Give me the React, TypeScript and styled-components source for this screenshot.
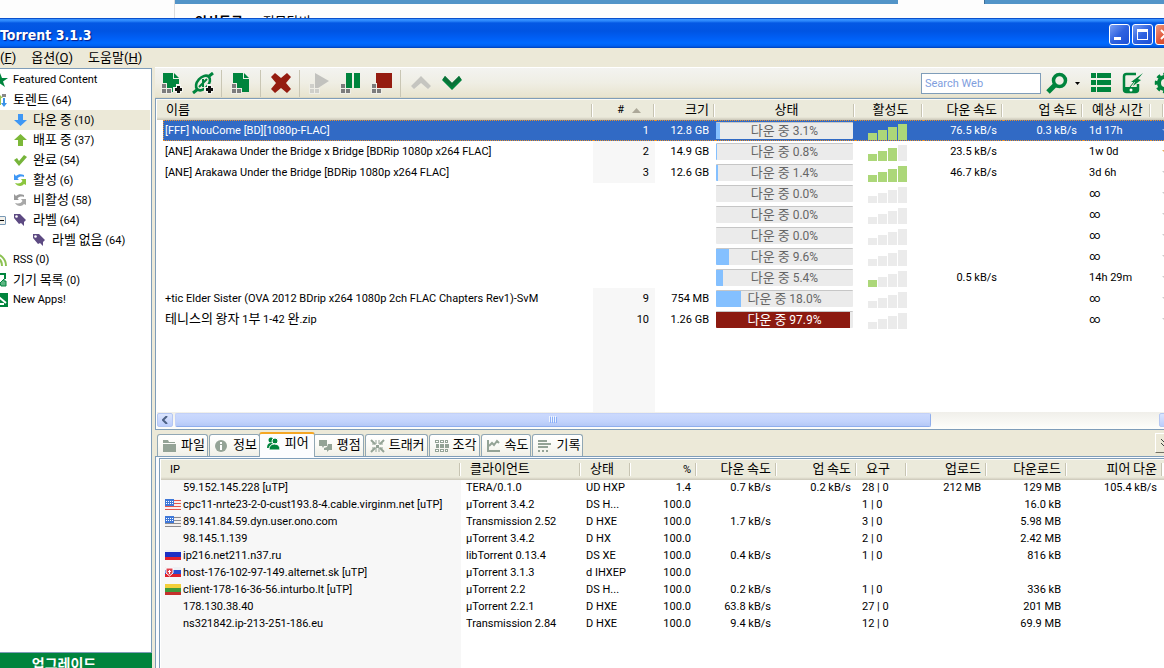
import React from 'react';
import styled, { createGlobalStyle, css } from 'styled-components';

const GlobalStyle = createGlobalStyle`
  html, body { margin: 0; padding: 0; overflow: hidden; background: #fdfdfd; }
  *, *::before, *::after { box-sizing: border-box; }
  body, button, input, table {
    font-family: Roboto, "Noto Sans CJK KR", sans-serif;
    font-size: 11px;
    line-height: 16px;
    color: #000;
  }
  button { border: 0; padding: 0; background: none; }
  svg { display: block; flex: none; }
`;

const GREEN = '#00843d';
const GRAY = '#94a396';
const LINE = '#7f9db9';
const FACE = '#ece9d8';

/* ---------- text ---------- */

const Hangul = styled.span`
  font-size: 13px;
  line-height: 16px;
`;

const Label = ({ children }: { children: string }) => (
  <>
    {children.split(/([\uac00-\ud7a3]+)/).map((part, i) =>
      i % 2 ? <Hangul key={i}>{part}</Hangul> : part,
    )}
  </>
);

/* ---------- frame ---------- */

const Screen = styled.div`
  height: 100vh;
  display: flex;
  flex-direction: column;
  overflow: hidden;
`;

const Backdrop = styled.div`
  height: 18px;
  flex: none;
  display: flex;
  overflow: hidden;
`;

const BackdropPage = styled.div`
  flex: 1;
  margin-left: 174px;
  border-left: 1px solid #dcdcdc;
`;

const BackdropBars = styled.div`
  display: grid;
  grid-template-columns: 723px 87px 1fr;
  height: 4px;
  background: #5294c8;
  & > i { background: #fdfdfd; grid-column: 2; border-right: 1px solid #3f6f98; }
`;

const BackdropLinks = styled.div`
  display: flex;
  gap: 20px;
  padding: 10px 0 0 20px;
  font-size: 13px;
  white-space: nowrap;
  line-height: 16px;
`;

const TitleBar = styled.header`
  height: 30px;
  flex: none;
  display: flex;
  align-items: center;
  overflow: hidden;
  background: linear-gradient(#0a50cc 0, #0a50cc 1px, #3c94ff 1px, #2a86fb 3px, #0458e4 5px, #0054e3 13px, #005ff5 20px, #006aff 25px, #0060f0 28px, #0040b8 30px);
`;

const TitleText = styled.h1`
  flex: 1;
  margin: 0;
  padding-top: 3px;
  font-family: "DejaVu Sans Condensed", "DejaVu Sans", sans-serif;
  font-size: 14px;
  font-weight: bold;
  color: #fff;
  text-shadow: 1px 1px 1px #0a1883;
`;

const WindowButtons = styled.div`
  display: flex;
  gap: 2px;
  margin: 3px -12px 0 0;
`;

const WindowButton = styled.button<{ $close?: boolean }>`
  width: 21px;
  height: 21px;
  border: 1px solid #fff;
  border-radius: 3px;
  background: ${(p) =>
    p.$close
      ? 'linear-gradient(135deg, #f09a80, #e0553a 50%, #c8401c)'
      : 'linear-gradient(135deg, #7ba0f4, #2e62e0 50%, #1c4fd6)'};
`;

const MenuBar = styled.nav`
  height: 19px;
  flex: none;
  display: flex;
  gap: 15px;
  align-items: center;
  background: ${FACE};
`;

const MenuButton = styled.button`
  font-size: 13px;
  line-height: 18px;
`;

const Body = styled.div`
  flex: 1;
  min-height: 0;
  display: flex;
  background: ${FACE};
`;

/* ---------- side bar ---------- */

const Sidebar = styled.aside`
  width: 152px;
  flex: none;
  margin-top: 1px;
  display: flex;
  flex-direction: column;
  overflow: hidden;
  border-top: 1px solid ${LINE};
  background: #fff;
`;

const Tree = styled.ul`
  flex: 1;
  margin: 0;
  padding: 1px 1px 0 0;
  list-style: none;
  border-right: 1px solid ${LINE};
  border-bottom: 1px solid ${LINE};
`;

const TreeRow = styled.li<{ $level: number; $selected?: boolean }>`
  position: relative;
  display: flex;
  align-items: center;
  gap: 5px;
  height: 20px;
  white-space: nowrap;
  background: ${(p) => (p.$selected ? FACE : 'none')};
  & > svg { margin-left: ${(p) => [-8, 12, 31][p.$level]}px; }
`;

const Expander = styled.button`
  position: absolute;
  left: -4px;
  top: 6px;
  width: 10px;
  height: 9px;
  border: 1px solid #7898b5;
  border-radius: 1px;
  background: linear-gradient(#000, #000) center / 5px 1px no-repeat, #f2f0ea;
`;

const Upgrade = styled.button`
  height: 22px;
  flex: none;
  margin-bottom: -7px;
  padding: 0 24px 0 0;
  background: ${GREEN};
  color: #fff;
  font-size: 14px;
  font-weight: bold;
`;

/* ---------- main column ---------- */

const Main = styled.main`
  flex: 1;
  min-width: 0;
  margin-left: 3px;
  display: flex;
  flex-direction: column;
`;

const Toolbar = styled.div`
  height: 31px;
  flex: none;
  display: flex;
  align-items: center;
  padding: 0 0 0 1px;
  overflow: hidden;
  border-top: 1px solid #fff;
  background: linear-gradient(#f3f3f0, #efeee4 50%, #e8e4cf 95%, #d8d3bd);
`;

const ToolButton = styled.button`
  width: 31px;
  height: 28px;
  flex: none;
  display: flex;
  align-items: center;
  justify-content: center;
`;

const ToolSeparator = styled.span`
  width: 1px;
  height: 27px;
  margin: 0 4px 0 3px;
  background: #c9c6b4;
`;

const SearchInput = styled.input`
  width: 120px;
  height: 21px;
  margin-left: auto;
  padding: 0 3px;
  border: 1px solid ${LINE};
  background: #fff;
  &::placeholder { color: #809ede; opacity: 1; }
`;

const ToolbarEnd = styled.div`
  display: flex;
  align-items: center;
  gap: 10px;
  margin: 0 -12px 0 5px;
`;

const SearchButton = styled.button`
  display: flex;
  align-items: center;
  gap: 7px;
`;

const ListPane = styled.section`
  flex: 331 1 0;
  min-height: 0;
  display: flex;
  flex-direction: column;
  border: solid ${LINE};
  border-width: 1px 0 1px 1px;
  padding-left: 1px;
  background: #fff;
`;

const TableArea = styled.div`
  flex: 1;
  min-height: 0;
  overflow: hidden;
`;

const Grid = styled.table`
  width: 100%;
  height: 100%;
  table-layout: fixed;
  border-collapse: separate;
  border-spacing: 0;
`;

const HeadCell = styled.th<{ $align?: string }>`
  height: 21px;
  padding: 0 6px 0 9px;
  font-weight: normal;
  white-space: nowrap;
  overflow: hidden;
  text-align: ${(p) => p.$align || 'left'};
  border-top: 1px solid #fbfaf5;
  background:
    linear-gradient(to right, #c7c4b2 50%, #fff 50%) right center / 2px 13px no-repeat,
    linear-gradient(#ebeadb 0, #ebeadb calc(100% - 3px), #cbc7b8 100%);
`;

const SortHead = styled.span`
  display: flex;
  align-items: center;
  justify-content: flex-end;
  gap: 8px;
  padding-right: 8px;
`;

const cellBase = css`
  padding: 0 6px;
  white-space: nowrap;
  overflow: hidden;
`;

const Cell = styled.td<{ $align?: string; $shade?: boolean }>`
  ${cellBase}
  height: 21px;
  text-align: ${(p) => p.$align || 'left'};
  background: ${(p) => (p.$shade ? '#f7f7f7' : 'none')};
`;

const Gutter = styled.td`
  padding: 0;
`;

const NameCell = styled(Cell)`
  padding-left: 2px;
`;

const StatusCell = styled(Cell)`
  padding: 0 2px 0 1px;
`;

const TorrentRow = styled.tr<{ $selected?: boolean }>`
  ${(p) =>
    p.$selected &&
    css`
      color: #fff;
      & > ${Cell} {
        background: #316ac5;
        border: dotted #e8912e;
        border-width: 1px 0;
      }
      & > ${Cell}:nth-child(2) { border-left-width: 1px; padding-left: 1px; }
    `}
`;

/* takes the height that the data rows leave, and carries the column shading down */
const FillerRow = styled.tr`
  height: 100%;
`;

const FillerCell = styled.td<{ $shade?: boolean }>`
  padding: 0;
  background: ${(p) => (p.$shade ? '#f7f7f7' : 'none')};
`;

const Progress = styled.div<{ $late?: boolean }>`
  position: relative;
  height: 17px;
  border-top: 1px solid #c6c6c6;
  border-radius: 1px;
  overflow: hidden;
  background: #ebebeb;
  color: ${(p) => (p.$late ? '#fff' : '#666')};
  font-size: 12px;
  text-align: center;
  line-height: 15px;
`;

const ProgressFill = styled.div<{ $late?: boolean }>`
  position: absolute;
  inset: -1px auto 0 0;
  background: ${(p) => (p.$late ? '#8c1a10' : '#84c0ff')};
`;

const ProgressText = styled.span`
  position: relative;
  & > ${Hangul} { line-height: 15px; }
`;

const Meter = styled.div`
  display: flex;
  align-items: flex-end;
  gap: 1px;
  height: 18px;
  padding-left: 7px;
`;

const MeterBar = styled.i<{ $step: number; $on: boolean }>`
  width: 9px;
  height: ${(p) => 4 + p.$step * 3}px;
  background: ${(p) => (p.$on ? '#acd779' : '#ebebeb')};
`;

const RatingCell = styled(Cell)`
  padding: 0 0 0 11px;
`;

/* ---------- scroll bar ---------- */

const ScrollBar = styled.div`
  height: 17px;
  flex: none;
  display: flex;
  gap: 2px;
  padding: 1px 0 2px;
  margin-right: -11px;
  background: linear-gradient(#f0efea, #fefefb);
`;

const ScrollArrow = styled.button`
  width: 16px;
  flex: none;
  display: flex;
  align-items: center;
  justify-content: center;
  border: 1px solid #b5c7f2;
  border-radius: 2px;
  background: linear-gradient(#dbe5fe, #bccdfb);
`;

const ScrollTrack = styled.div`
  flex: 1;
`;

const ScrollThumb = styled.div`
  width: 77%;
  height: 100%;
  display: flex;
  align-items: center;
  justify-content: center;
  gap: 1px;
  border: 1px solid #8fadec;
  border-left-color: #c3d1f8;
  border-top-color: #c3d1f8;
  border-radius: 2px;
  background: linear-gradient(#cbd9fd, #c2d3fc 60%, #b4c8f6);
  & > i { width: 1px; height: 6px; background: #8cb0f8; box-shadow: -1px -1px 0 #eef4fe; }
`;

/* ---------- details ---------- */

const Details = styled.section`
  flex: 239 1 0;
  min-height: 0;
  display: flex;
  flex-direction: column;
`;

const TabRow = styled.div`
  height: 27px;
  flex: none;
  display: flex;
  align-items: flex-end;
  padding: 0 0 0 2px;
  overflow: hidden;
  background: linear-gradient(${LINE}, ${LINE}) bottom / 100% 1px no-repeat;
`;

const TabList = styled.div`
  display: flex;
  align-items: flex-end;
  gap: 1px;
`;

const Tab = styled.button<{ $active?: boolean }>`
  display: flex;
  align-items: center;
  gap: 4px;
  height: 22px;
  margin-bottom: 1px;
  padding: 0 2px 0 4px;
  border: 1px solid #91a7b4;
  border-bottom: 0;
  border-radius: 3px 3px 0 0;
  background: linear-gradient(#fff, #fafaf6 50%, #f0efe6);
  white-space: nowrap;
  ${(p) =>
    p.$active &&
    css`
      position: relative;
      height: 25px;
      margin: 0 -3px 0 -2px;
      padding: 0 5px 4px 6px;
      border-top: 2px solid #f5a623;
      background: #fcfcfe;
    `}
`;

const CollapseButton = styled.button`
  width: 20px;
  height: 20px;
  margin: 0 -11px 4px auto;
  display: flex;
  align-items: center;
  padding-left: 5px;
  border: 1px solid #fff;
  border-right-color: #716f64;
  border-bottom-color: #716f64;
  background: ${FACE};
`;

const PeerFrame = styled.div`
  flex: 1;
  min-height: 0;
  padding: 1px 0 0 3px;
  border-left: 1px solid ${LINE};
  background: #fcfcfe;
`;

const PeerBox = styled.div`
  height: 100%;
  padding-left: 1px;
  overflow: hidden;
  border: solid ${LINE};
  border-width: 1px 0 0 1px;
  background: #fff;
`;

const PeerCell = styled.td<{ $align?: string; $shade?: boolean }>`
  ${cellBase}
  height: 17px;
  padding-left: 5px;
  text-align: ${(p) => p.$align || 'left'};
  background: ${(p) => (p.$shade ? '#f7f7f7' : 'none')};
`;

const Host = styled.div`
  display: flex;
  align-items: center;
  gap: 2px;
  line-height: 16px;
`;

const FlagSlot = styled.span`
  width: 16px;
  height: 11px;
  flex: none;
  margin-left: -1px;
  margin-bottom: 2px;
`;

/* ---------- icons ---------- */

const Pixels = ({ color = '#7c7c7c' }: { color?: string }) => (
  <g>
    <path d="M0 11h6v5h5v6H0z" fill="#efeee6" />
    <rect x="1" y="12" width="4" height="4" fill={color} />
    <rect x="1" y="17" width="4" height="4" fill={color} />
    <rect x="6" y="17" width="4" height="4" fill={color} />
  </g>
);

const Plus = () => (
  <g>
    <path d="M15 12h5v3h2v5h-2v2h-5v-2h-3v-5h3z" fill="#f4f4ee" />
    <path d="M16 14h3v2h2v3h-2v2h-3v-2h-2v-3h2z" fill="#111" />
  </g>
);

const Tool = ({ name }: { name: string }) => (
  <svg width="22" height="22" viewBox="0 0 22 22" aria-hidden="true">
    {(name === 'add' || name === 'create') && (
      <>
        <path d="M2 1h10v6h6v13H2z" fill={GREEN} />
        <path d="M13 1l5 5h-5z" fill={GREEN} />
        <Pixels />
        {name === 'add' && <Plus />}
      </>
    )}
    {name === 'link' && (
      <>
        <g fill="none" stroke={GREEN} strokeWidth="2.600">
          <ellipse cx="11" cy="11" rx="8.500" ry="5.500" transform="rotate(-48 11 11)" />
          <path d="M1 21l5-4M16 5l5-4" strokeWidth="3" />
          <path d="M7 15l4-4V7M11 15v-4l4-4" strokeWidth="2" />
        </g>
        <Plus />
      </>
    )}
    {name === 'remove' && (
      <path d="M5 1l6 5 6-5 4 4-5 6 5 6-4 4-6-5-6 5-4-4 5-6-5-6z" fill="#951c10" />
    )}
    {name === 'start' && (
      <>
        <path d="M6 1l14 8-14 9z" fill="#c2c2be" />
        <Pixels color="#cfcfca" />
      </>
    )}
    {name === 'pause' && (
      <>
        <path d="M6 1h6v15H6zM14 1h6v15h-6z" fill={GREEN} />
        <Pixels />
      </>
    )}
    {name === 'stop' && (
      <>
        <path d="M5 1h16v15H5z" fill="#951c10" />
        <Pixels />
      </>
    )}
    {name === 'up' && <path d="M1 14L11 4l10 10-3 3-7-6-7 6z" fill="#c5c5c0" />}
    {name === 'down' && (
      <>
        <path d="M1 8l3-4 7 7 7-7 3 4-10 10z" fill="#00843d" />
        <path d="M2 7l2-3 7 7 7-7 2 3-9 8z" fill="#0b7038" />
      </>
    )}
    {name === 'search' && (
      <>
        <circle cx="13.500" cy="8.500" r="6" fill="none" stroke={GREEN} strokeWidth="3.500" />
        <path d="M9 13l-7 7" stroke={GREEN} strokeWidth="5" />
      </>
    )}
    {name === 'list' && (
      <path
        d="M1 1h5v5H1zM7 1h14v5H7zM1 8h5v5H1zM7 8h14v5H7zM1 15h5v5H1zM7 15h14v5H7z"
        fill={GREEN}
      />
    )}
    {name === 'phone' && (
      <>
        <path d="M14 2H4.500Q2 2 2 4.500v13Q2 20 4.500 20h9q2.500 0 2.500-2.500V12" fill="none" stroke={GREEN} strokeWidth="2.500" />
        <path d="M2 15h14v5H2z" fill={GREEN} />
        <circle cx="9" cy="18" r="1.500" fill="#fff" />
        <path d="M21 1l-5 6 3 1-8 6 2-4H9z" fill={GREEN} />
        <path d="M12 10l-4 5" stroke={GREEN} />
      </>
    )}
    {name === 'gear' && (
      <>
        <circle cx="11" cy="11" r="6" fill="none" stroke={GREEN} strokeWidth="4" />
        <circle cx="11" cy="11" r="8.500" fill="none" stroke={GREEN} strokeWidth="3.500" strokeDasharray="3.700 2.976" strokeDashoffset="1.850" />
      </>
    )}
  </svg>
);

const TreeIcon = ({ name }: { name: string }) => (
  <svg width="16" height="16" viewBox="0 0 16 16" aria-hidden="true">
    {name === 'star' && <path d="M8 1l2 5h6l-5 3.500 2 5.500-5-3.500L3 15l2-5.500L0 6h6z" fill={GREEN} />}
    {name === 'torrents' && (
      <>
        <path d="M3 2l4 4H5v7H2V6H0z" transform="translate(4 0)" fill="#9ac455" />
        <path d="M10 2h4v3h-4z" fill="#888" />
        <path d="M11 6h2v5h2l-3 4-3-4h2z" fill="#3a92e8" />
      </>
    )}
    {name === 'down' && <path d="M6 2h5v6h4l-6.500 6L2 8h4z" fill="#3e97f5" />}
    {name === 'up' && <path d="M6 14h5V8h4L8.500 2 2 8h4z" fill="#7cb838" />}
    {name === 'check' && <path d="M2 8l3-2 2 3 5-6 3 2-8 9z" fill="#76b43a" />}
    {(name === 'active' || name === 'inactive') && (
      <>
        <path
          d="M2 2v6h5L5.500 6.500C7 4.500 10 4 12 5V3C9 1.500 6 2 4 4z"
          fill={name === 'active' ? '#3e97f5' : '#9a9a9a'}
        />
        <path
          d="M14 7H9l1.500 2C9 11.500 6 12 3 11c2 3.500 7 4 9 1l2 1z"
          fill={name === 'active' ? '#8cc63f' : '#a8a8a8'}
        />
      </>
    )}
    {name === 'tag' && (
      <>
        <path d="M2 2h6l6 6-2 2v4L9 11l-2 1-5-6z" fill="#5d4a82" />
        <circle cx="4.500" cy="4.500" r="1.300" fill="#fff" />
      </>
    )}
    {name === 'rss' && (
      <g fill="none" stroke="#8cc152" strokeWidth="2">
        <path d="M2 2c7 0 12 5 12 12M2 6c5 0 8 3 8 8" />
        <circle cx="3" cy="13" r="1" />
      </g>
    )}
    {name === 'devices' && (
      <>
        <path d="M1 2h12v5M1 2v12h7" fill="none" stroke={GREEN} strokeWidth="2" />
        <path d="M8 11l4-4v2h2v5H9z" fill="#5cb583" stroke={GREEN} />
      </>
    )}
    {name === 'apps' && (
      <>
        <path d="M0 1h16v14H0z" fill={GREEN} />
        <path d="M3 11l5-5 6 5M8 12h4" fill="none" stroke="#fff" strokeWidth="2" />
      </>
    )}
  </svg>
);

const TabIcon = ({ name }: { name: string }) => (
  <svg width="15" height="15" viewBox="0 0 15 15" aria-hidden="true">
    {name === '파일' && <path d="M1 2h5l1 2h6v1H1zM1 6h13v8H1z" fill={GRAY} />}
    {name === '정보' && (
      <>
        <circle cx="7" cy="8" r="6" fill={GRAY} />
        <path d="M6 4h2v2H6zM6 7h2v5H6z" fill="#fff" />
      </>
    )}
    {name === '피어' && (
      <g fill={GREEN}>
        <circle cx="5" cy="4" r="2.500" />
        <path d="M1 12q0-5 4-5t4 5z" />
        <circle cx="9" cy="5" r="3" stroke="#fff" />
        <path d="M3 14q0-6 5.500-6T14 14z" stroke="#fff" />
      </g>
    )}
    {name === '평점' && (
      <path d="M1 2h8v6H6L5 10 4 8H1zM10 6h4v6h-3l-2 2v-2H6v-2l3-1z" fill={GRAY} />
    )}
    {name === '트래커' && (
      <g stroke={GRAY} strokeWidth="2">
        <path d="M1 2l4 4M14 2l-4 4M1 14l4-4M14 14l-4-4" />
        <path d="M2 6h4V2M13 6H9V2M2 10h4v4M13 10H9v4" fill="none" strokeWidth="1" />
        <path d="M6 7h3v3H6z" fill={GRAY} stroke="none" />
      </g>
    )}
    {name === '조각' && (
      <>
        <path
          d="M1 2h4v3H1zM6 2h4v3H6zM11 2h3v3h-3zM1 11h4v3H1zM6 11h4v3H6zM11 11h3v3h-3zM2 6h3v4H2zM6 6h4v4H6zM11 6h4v4h-4z"
          fill={GRAY}
        />
        <path d="M2 3h2v1H2zM7 3h2v1H7zM12 3h1v1h-1zM2 12h2v1H2zM7 12h2v1H7zM12 12h1v1h-1z" fill="#fff" />
      </>
    )}
    {name === '속도' && (
      <g fill="none" stroke={GRAY}>
        <path d="M2 2v11h12" strokeWidth="2" />
        <path d="M3 8l3-3 2 2 3-4 2 2" strokeWidth="2" />
      </g>
    )}
    {name === '기록' && (
      <path d="M1 2h9v2H1zM1 5h13v2H1zM1 8h10v2H1zM1 12h2v2H1zM5 12h2v2H5zM9 12h2v2H9z" fill={GRAY} />
    )}
  </svg>
);

const Flag = ({ code }: { code: string }) => (
  <svg width="16" height="11" viewBox="0 0 16 11" aria-hidden="true">
    {code === 'us' && (
      <>
        <path d="M0 0h16v11H0z" fill="#fbeeee" />
        <path d="M0 1.500h16M0 4.500h16M0 7.500h16M0 10.500h16" stroke="#e4574f" />
        <path d="M0 0h9v7H0z" fill="#3f78d8" />
        <path d="M1 2.500h8M1 4.500h8" stroke="#fff" strokeDasharray="1 1" />
      </>
    )}
    {code === 'my' && (
      <>
        <path d="M0 0h16v11H0z" fill="#f4f0ee" />
        <path d="M0 1.500h16M0 4.500h16M0 7.500h16M0 10.500h16" stroke="#8c8c90" />
        <path d="M0 0h9v7H0z" fill="#3f78d8" />
        <path d="M1 2.500h8M1 4.500h8" stroke="#fff" strokeDasharray="1 1" />
      </>
    )}
    {code === 'ru' && (
      <>
        <path d="M0 0h16v3H0z" fill="#eef0f4" />
        <path d="M0 2h16v5H0z" fill="#1c2fc4" />
        <path d="M0 7h16v3H0z" fill="#e0202c" />
      </>
    )}
    {code === 'sk' && (
      <>
        <path d="M0 0h16v3H0z" fill="#eef0f4" />
        <path d="M0 3h16v4H0z" fill="#2c4cd0" />
        <path d="M0 7h16v3H0z" fill="#e0202c" />
        <path d="M1 1h7v5L4.500 9 1 6z" fill="#e0404c" stroke="#fff" />
        <path d="M4 3h1v4H4zM3 4h3v1H3z" fill="#fff" />
      </>
    )}
    {code === 'lt' && (
      <>
        <path d="M0 0h16v4H0z" fill="#f4cf3a" />
        <path d="M0 4h16v4H0z" fill="#3f9a3c" />
        <path d="M0 8h16v3H0z" fill="#c4302c" />
      </>
    )}
  </svg>
);

/* ---------- data ---------- */

type Torrent = {
  name?: string; n?: number; size?: string; pct: string; bars: number;
  down?: string; up?: string; eta: string;
};

const torrents: Torrent[] = [
  { name: '[FFF] NouCome [BD][1080p-FLAC]', n: 1, size: '12.8 GB', pct: '3.1', bars: 4, down: '76.5 kB/s', up: '0.3 kB/s', eta: '1d 17h' },
  { name: '[ANE] Arakawa Under the Bridge x Bridge [BDRip 1080p x264 FLAC]', n: 2, size: '14.9 GB', pct: '0.8', bars: 3, down: '23.5 kB/s', eta: '1w 0d' },
  { name: '[ANE] Arakawa Under the Bridge [BDRip 1080p x264 FLAC]', n: 3, size: '12.6 GB', pct: '1.4', bars: 4, down: '46.7 kB/s', eta: '3d 6h' },
  { pct: '0.0', bars: 0, eta: '∞' },
  { pct: '0.0', bars: 0, eta: '∞' },
  { pct: '0.0', bars: 0, eta: '∞' },
  { pct: '9.6', bars: 0, eta: '∞' },
  { pct: '5.4', bars: 1, down: '0.5 kB/s', eta: '14h 29m' },
  { name: '+tic Elder Sister (OVA 2012 BDrip x264 1080p 2ch FLAC Chapters Rev1)-SvM', n: 9, size: '754 MB', pct: '18.0', bars: 0, eta: '∞' },
  { name: '테니스의 왕자 1부 1-42 완.zip', n: 10, size: '1.26 GB', pct: '97.9', bars: 0, eta: '∞' },
];

const peers: string[][] = [
  ['', '59.152.145.228 [uTP]', 'TERA/0.1.0', 'UD HXP', '1.4', '0.7 kB/s', '0.2 kB/s', '28 | 0', '212 MB', '129 MB', '105.4 kB/s'],
  ['us', 'cpc11-nrte23-2-0-cust193.8-4.cable.virginm.net [uTP]', 'µTorrent 3.4.2', 'DS H...', '100.0', '', '', '1 | 0', '', '16.0 kB', ''],
  ['my', '89.141.84.59.dyn.user.ono.com', 'Transmission 2.52', 'D HXE', '100.0', '1.7 kB/s', '', '3 | 0', '', '5.98 MB', ''],
  ['', '98.145.1.139', 'µTorrent 3.4.2', 'D HX', '100.0', '', '', '2 | 0', '', '2.42 MB', ''],
  ['ru', 'ip216.net211.n37.ru', 'libTorrent 0.13.4', 'DS XE', '100.0', '0.4 kB/s', '', '1 | 0', '', '816 kB', ''],
  ['sk', 'host-176-102-97-149.alternet.sk [uTP]', 'µTorrent 3.1.3', 'd IHXEP', '100.0', '', '', '', '', '', ''],
  ['lt', 'client-178-16-36-56.inturbo.lt [uTP]', 'µTorrent 2.2', 'DS H...', '100.0', '0.2 kB/s', '', '1 | 0', '', '336 kB', ''],
  ['', '178.130.38.40', 'µTorrent 2.2.1', 'D HXE', '100.0', '63.8 kB/s', '', '27 | 0', '', '201 MB', ''],
  ['', 'ns321842.ip-213-251-186.eu', 'Transmission 2.84', 'D HXE', '100.0', '9.4 kB/s', '', '12 | 0', '', '69.9 MB', ''],
];

const peerHeads: [string, string][] = [
  ['IP', 'left'], ['클라이언트', 'left'], ['상태', 'left'], ['%', 'right'], ['다운 속도', 'right'],
  ['업 속도', 'right'], ['요구', 'left'], ['업로드', 'right'], ['다운로드', 'right'], ['피어 다운', 'right'],
];
const peerWidths = [300, 120, 50, 66, 80, 80, 50, 80, 80, 96];
const torrentWidths = [6, 430, 62, 60, 140, 68, 80, 80, 68];

const tree: { icon: string; text: string; level: number; selected?: boolean; open?: boolean }[] = [
  { icon: 'star', text: 'Featured Content', level: 0 },
  { icon: 'torrents', text: '토렌트 (64)', level: 0 },
  { icon: 'down', text: '다운 중 (10)', level: 1, selected: true },
  { icon: 'up', text: '배포 중 (37)', level: 1 },
  { icon: 'check', text: '완료 (54)', level: 1 },
  { icon: 'active', text: '활성 (6)', level: 1 },
  { icon: 'inactive', text: '비활성 (58)', level: 1 },
  { icon: 'tag', text: '라벨 (64)', level: 1, open: true },
  { icon: 'tag', text: '라벨 없음 (64)', level: 2 },
  { icon: 'rss', text: 'RSS (0)', level: 0 },
  { icon: 'devices', text: '기기 목록 (0)', level: 0 },
  { icon: 'apps', text: 'New Apps!', level: 0 },
];

const tools = ['add', 'link', '|', 'create', '|', 'remove', '|', 'start', 'pause', 'stop', '|', 'up', 'down'];
const tabs = ['파일', '정보', '피어', '평점', '트래커', '조각', '속도', '기록'];

/* ---------- page ---------- */

const TorrentTable = () => (
  <Grid>
    <colgroup>
      {torrentWidths.map((w, i) => <col key={i} width={w} />)}
      <col />
    </colgroup>
    <thead>
      <tr>
        <HeadCell colSpan={2}><Label>이름</Label></HeadCell>
        <HeadCell $align="right">
          <SortHead>
            #
            <svg width="9" height="5" viewBox="0 0 9 5" aria-hidden="true"><path d="M0 5l4.500-5L9 5z" fill="#aca899" /></svg>
          </SortHead>
        </HeadCell>
        <HeadCell $align="right"><Label>크기</Label></HeadCell>
        <HeadCell $align="center"><Label>상태</Label></HeadCell>
        <HeadCell $align="center"><Label>활성도</Label></HeadCell>
        <HeadCell $align="right"><Label>다운 속도</Label></HeadCell>
        <HeadCell $align="right"><Label>업 속도</Label></HeadCell>
        <HeadCell><Label>예상 시간</Label></HeadCell>
        <HeadCell />
      </tr>
    </thead>
    <tbody>
      {torrents.map((t, i) => {
        const late = t.pct === '97.9';
        const shade = t.n !== undefined;
        return (
          <TorrentRow key={i} $selected={i === 0}>
            <Gutter />
            <NameCell>{t.name && <Label>{t.name}</Label>}</NameCell>
            <Cell $align="right" $shade={shade}>{t.n}</Cell>
            <Cell $align="right">{t.size}</Cell>
            <StatusCell>
              <Progress $late={late}>
                <ProgressFill $late={late} style={{ width: `${t.pct}%` }} />
                <ProgressText><Label>{`다운 중 ${t.pct}%`}</Label></ProgressText>
              </Progress>
            </StatusCell>
            <Cell>
              <Meter>
                {[1, 2, 3, 4].map((s) => <MeterBar key={s} $step={s} $on={s <= t.bars} />)}
              </Meter>
            </Cell>
            <Cell $align="right">{t.down}</Cell>
            <Cell $align="right">{t.up}</Cell>
            <Cell>{t.eta}</Cell>
            <RatingCell>
              <svg width="12" height="12" viewBox="0 0 12 12" aria-hidden="true">
                <path d="M6 0l2 4h4L9 7l1 5-4-3-4 3 1-5-3-3h4z" fill={i === 0 ? '#8fb0e6' : i === 1 ? '#e8b060' : '#cfcfcf'} />
              </svg>
            </RatingCell>
          </TorrentRow>
        );
      })}
      <FillerRow>
        <FillerCell colSpan={2} />
        <FillerCell $shade />
        <FillerCell colSpan={7} />
      </FillerRow>
    </tbody>
  </Grid>
);

const PeerTable = () => (
  <Grid>
    <colgroup>
      {peerWidths.map((w, i) => <col key={i} width={w} />)}
      <col />
    </colgroup>
    <thead>
      <tr>
        {peerHeads.map(([text, align]) => (
          <HeadCell key={text} $align={align}><Label>{text}</Label></HeadCell>
        ))}
        <HeadCell />
      </tr>
    </thead>
    <tbody>
      {peers.map(([flag, host, ...rest]) => (
        <tr key={host}>
          <PeerCell $shade>
            <Host>
              <FlagSlot>{flag && <Flag code={flag} />}</FlagSlot>
              {host}
            </Host>
          </PeerCell>
          {rest.map((value, i) => (
            <PeerCell key={i} $align={peerHeads[i + 1][1]}>{value}</PeerCell>
          ))}
          <PeerCell />
        </tr>
      ))}
      <FillerRow>
        <FillerCell $shade />
        <FillerCell colSpan={10} />
      </FillerRow>
    </tbody>
  </Grid>
);

export default function App() {
  return (
    <Screen>
      <GlobalStyle />
      <Backdrop>
        <BackdropPage>
          <BackdropBars><i /></BackdropBars>
          <BackdropLinks><b>인사등록</b><span>직무타비</span></BackdropLinks>
        </BackdropPage>
      </Backdrop>
      <TitleBar>
        <TitleText>Torrent 3.1.3</TitleText>
        <WindowButtons>
          <WindowButton aria-label="최소화">
            <svg width="19" height="19" viewBox="0 0 19 19"><path d="M4 12h7v3H4z" fill="#fff" /></svg>
          </WindowButton>
          <WindowButton aria-label="최대화">
            <svg width="19" height="19" viewBox="0 0 19 19"><path d="M4 4h11v11H4zM5 7v7h9V7z" fill="#fff" fillRule="evenodd" /></svg>
          </WindowButton>
          <WindowButton aria-label="닫기" $close>
            <svg width="19" height="19" viewBox="0 0 19 19"><path d="M5 5l9 9M14 5l-9 9" stroke="#fff" strokeWidth="2" /></svg>
          </WindowButton>
        </WindowButtons>
      </TitleBar>
      <MenuBar>
        <MenuButton>(<u>F</u>)</MenuButton>
        <MenuButton>옵션(<u>O</u>)</MenuButton>
        <MenuButton>도움말(<u>H</u>)</MenuButton>
      </MenuBar>
      <Body>
        <Sidebar>
          <Tree>
            {tree.map((item) => (
              <TreeRow key={item.text} $level={item.level} $selected={item.selected}>
                {item.open && <Expander aria-label="접기" />}
                <TreeIcon name={item.icon} />
                <span><Label>{item.text}</Label></span>
              </TreeRow>
            ))}
          </Tree>
          <Upgrade>업그레이드</Upgrade>
        </Sidebar>
        <Main>
          <Toolbar>
            {tools.map((t, i) =>
              t === '|' ? <ToolSeparator key={i} /> : <ToolButton key={i} aria-label={t}><Tool name={t} /></ToolButton>,
            )}
            <SearchInput placeholder="Search Web" aria-label="Search Web" />
            <ToolbarEnd>
              <SearchButton aria-label="search">
                <Tool name="search" />
                <svg width="5" height="3" viewBox="0 0 5 3"><path d="M0 0h5L2.500 3z" /></svg>
              </SearchButton>
              <Tool name="list" />
              <Tool name="phone" />
              <Tool name="gear" />
            </ToolbarEnd>
          </Toolbar>
          <ListPane>
            <TableArea><TorrentTable /></TableArea>
            <ScrollBar>
              <ScrollArrow aria-label="왼쪽">
                <svg width="6" height="8" viewBox="0 0 6 8"><path d="M5 0L1 4l4 4" fill="none" stroke="#4d6185" strokeWidth="2" /></svg>
              </ScrollArrow>
              <ScrollTrack><ScrollThumb><i /><i /><i /><i /></ScrollThumb></ScrollTrack>
              <ScrollArrow aria-label="오른쪽" />
            </ScrollBar>
          </ListPane>
          <Details>
            <TabRow>
              <TabList role="tablist">
                {tabs.map((t) => (
                  <Tab key={t} role="tab" aria-selected={t === '피어'} $active={t === '피어'}>
                    <TabIcon name={t} />
                    <span><Label>{t}</Label></span>
                  </Tab>
                ))}
              </TabList>
              <CollapseButton aria-label="접기">
                <svg width="8" height="8" viewBox="0 0 8 8"><path d="M0 0l3 3 3-3M0 4l3 3 3-3" fill="none" stroke="#444" /></svg>
              </CollapseButton>
            </TabRow>
            <PeerFrame><PeerBox><PeerTable /></PeerBox></PeerFrame>
          </Details>
        </Main>
      </Body>
    </Screen>
  );
}
